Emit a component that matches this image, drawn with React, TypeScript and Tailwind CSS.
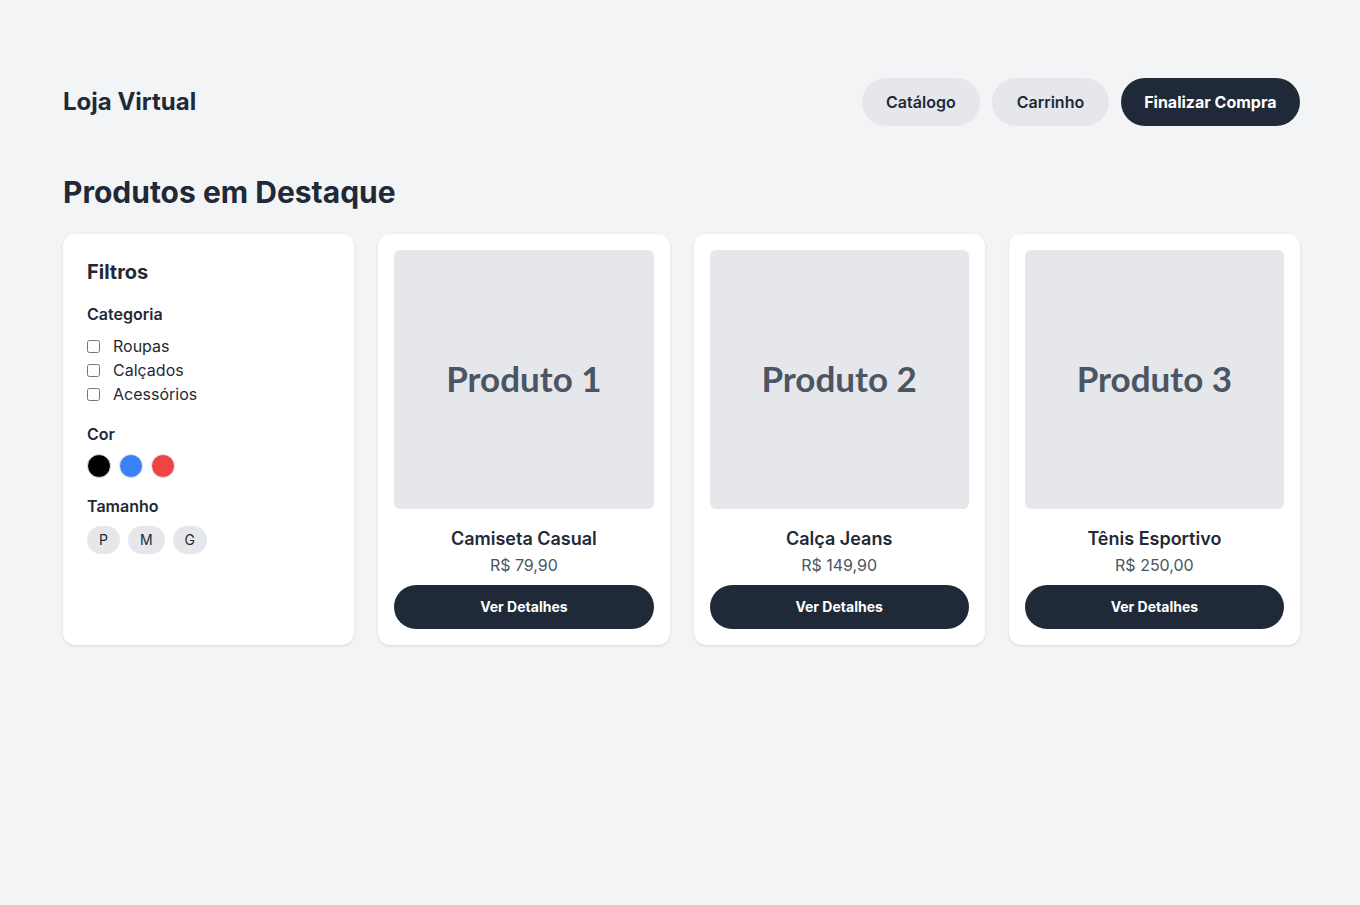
const products = [
  { label: "Produto 1", name: "Camiseta Casual", price: "R$ 79,90" },
  { label: "Produto 2", name: "Calça Jeans", price: "R$ 149,90" },
  { label: "Produto 3", name: "Tênis Esportivo", price: "R$ 250,00" },
];

function Filters() {
  return (
    <div className="bg-white rounded-xl shadow-sm p-6">
      <h2 className="text-xl font-bold leading-7">Filtros</h2>
      <div className="mt-4">
        <h3 className="text-base font-semibold leading-6">Categoria</h3>
        <div className="mt-2 flex flex-col">
          {["Roupas", "Calçados", "Acessórios"].map((c) => (
            <label key={c} className="flex items-center gap-[13px] h-6 text-base text-[#1f2937]">
              <input type="checkbox" className="w-[13px] h-[13px]" />
              {c}
            </label>
          ))}
        </div>
      </div>
      <div className="mt-4">
        <h3 className="text-base font-semibold leading-6">Cor</h3>
        <div className="mt-2 flex gap-2">
          <span className="w-6 h-6 rounded-full bg-black border border-gray-200" />
          <span className="w-6 h-6 rounded-full bg-[#3b82f6] border border-gray-200" />
          <span className="w-6 h-6 rounded-full bg-[#ef4444] border border-gray-200" />
        </div>
      </div>
      <div className="mt-4">
        <h3 className="text-base font-semibold leading-6">Tamanho</h3>
        <div className="mt-2 flex gap-2">
          {["P", "M", "G"].map((s) => (
            <button key={s} className="h-7 px-3 rounded-full bg-[#e5e7eb] text-sm text-[#1f2937]">
              {s}
            </button>
          ))}
        </div>
      </div>
    </div>
  );
}

function ProductCard({ label, name, price }: { label: string; name: string; price: string }) {
  return (
    <div className="bg-white rounded-xl shadow-sm p-4 flex flex-col">
      <div className="aspect-square rounded-md bg-[#e5e7eb] flex items-center justify-center pb-[2px]">
        <span className="text-[35px] leading-none font-bold text-[#4b5563] font-['Lato',sans-serif]">{label}</span>
      </div>
      <div className="mt-4 text-center text-lg font-semibold leading-7">{name}</div>
      <div className="text-center text-base text-[#4b5563] leading-6">{price}</div>
      <button className="mt-2 h-11 rounded-full bg-[#1f2937] text-white text-sm font-bold">
        Ver Detalhes
      </button>
    </div>
  );
}

export default function App() {
  return (
    <div
      className="min-h-screen bg-[#f3f4f6] text-[#1f2937] pl-[63px] pr-[60px] pt-[78px]"
      style={{ fontFamily: "Inter, 'Noto Sans', sans-serif" }}
    >
      <header className="flex items-center justify-between">
        <h1 className="text-2xl font-bold">Loja Virtual</h1>
        <nav className="flex gap-3">
          <button className="h-12 px-[24.5px] rounded-full bg-[#e5e7eb] font-semibold">Catálogo</button>
          <button className="h-12 px-[24.5px] rounded-full bg-[#e5e7eb] font-semibold">Carrinho</button>
          <button className="h-12 px-[23.5px] rounded-full bg-[#1f2937] text-white font-bold">
            Finalizar Compra
          </button>
        </nav>
      </header>
      <h2 className="mt-12 text-3xl font-bold">Produtos em Destaque</h2>
      <div className="mt-6 grid grid-cols-4 gap-6 items-stretch">
        <Filters />
        {products.map((p) => (
          <ProductCard key={p.label} {...p} />
        ))}
      </div>
    </div>
  );
}
